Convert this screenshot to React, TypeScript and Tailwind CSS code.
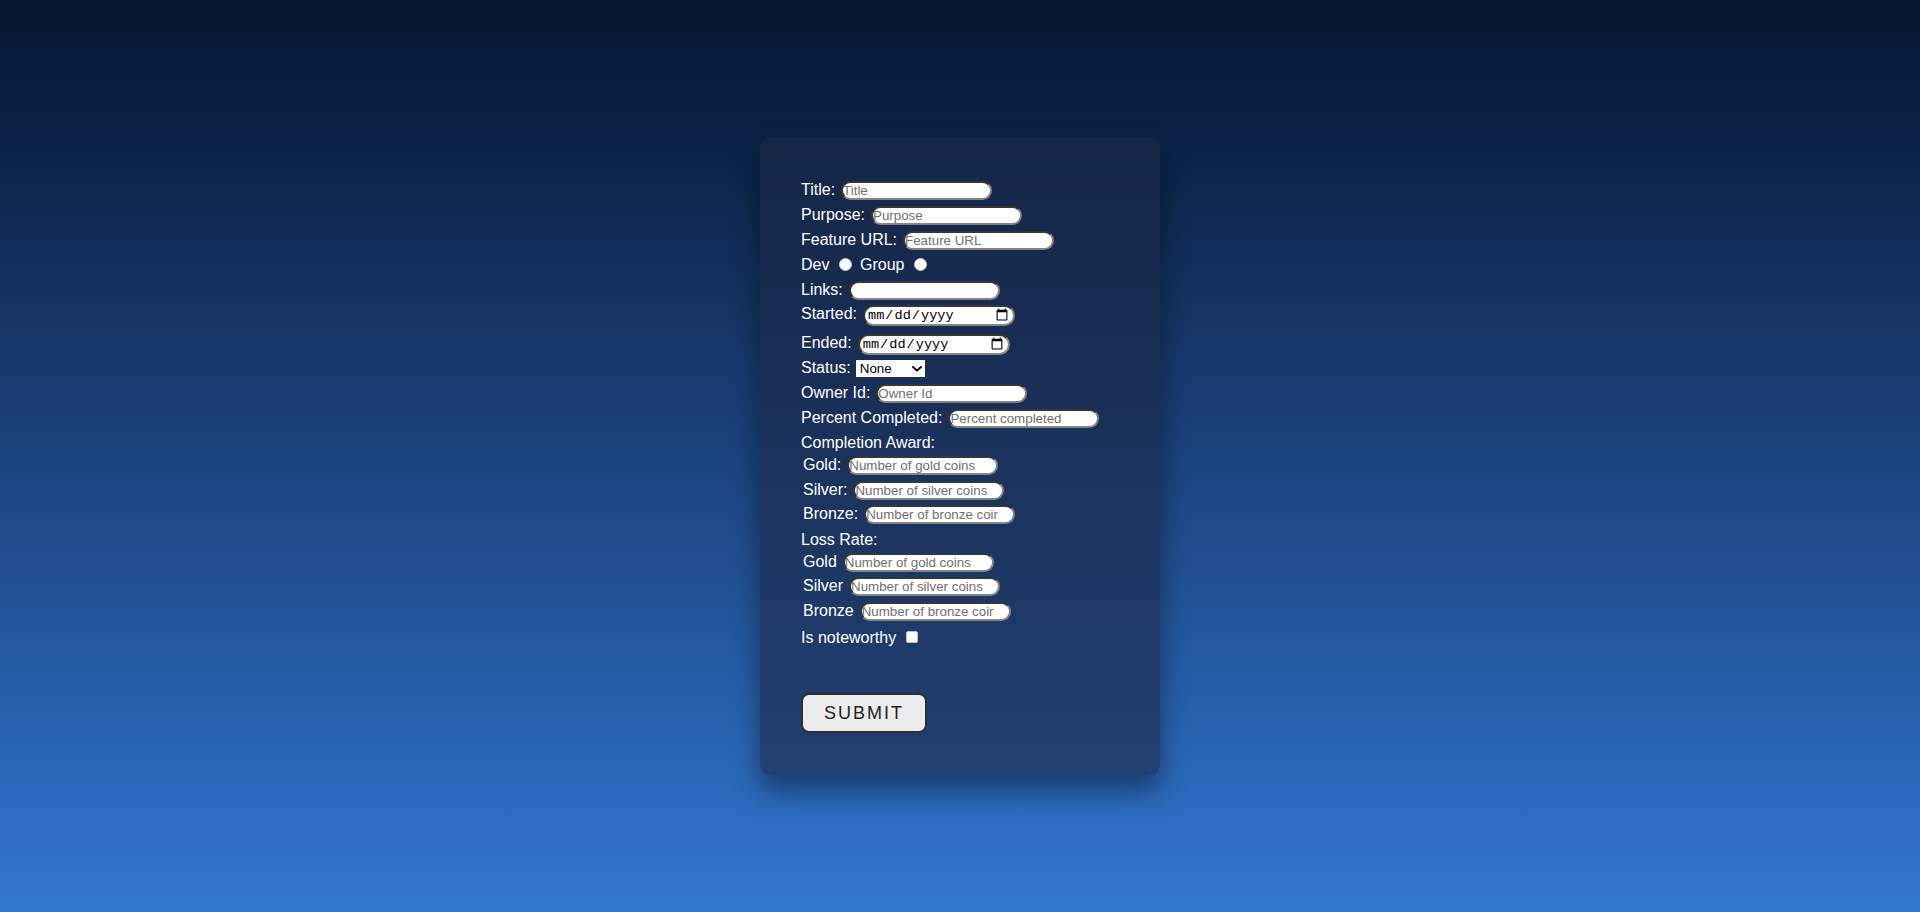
import type { ReactNode } from 'react'

const textInput =
  "ml-[6px] h-[19px] w-[151px] rounded-full border-2 border-t-[#363636] border-l-[#363636] border-r-[#858585] border-b-[#858585] bg-white px-0 text-[13.33px] leading-[15px] text-black placeholder:text-[#6f6f6f] outline-none"

const dateInput =
  "ml-[6px] h-[21px] w-[152px] rounded-full border-2 border-t-[#363636] border-l-[#363636] border-r-[#858585] border-b-[#858585] bg-white px-[2px] py-[1px] font-['Liberation_Mono',monospace] text-[13.6px] leading-[15px] text-black outline-none"

function Row({ h, children, indent }: { h: string; children: ReactNode; indent?: boolean }) {
  return (
    <div className={`flex items-baseline whitespace-nowrap ${h} ${indent ? 'pl-[2px]' : ''}`}>
      {children}
    </div>
  )
}

export default function App() {
  return (
    <div className="flex min-h-screen items-center justify-center bg-linear-to-b from-[#061530] to-[#3278d4] font-['Liberation_Sans',Arial,sans-serif]">
      <form
        onSubmit={(e) => e.preventDefault()}
        className="flex w-[400px] flex-col items-start rounded-[10px] bg-[rgba(27,40,71,0.62)] pt-[43px] pb-[42px] pl-[41px] text-[16px] leading-[18px] text-white shadow-[0_16px_28px_rgba(0,0,0,0.42)]"
      >
        <Row h="h-[25px]">
          <span>Title:</span>
          <input type="text" placeholder="Title" className={textInput} />
        </Row>
        <Row h="h-[25px]">
          <span>Purpose:</span>
          <input type="text" placeholder="Purpose" className={textInput} />
        </Row>
        <Row h="h-[25px]">
          <span>Feature URL:</span>
          <input type="text" placeholder="Feature URL" className={textInput} />
        </Row>
        <Row h="h-[25px]">
          <span>Dev</span>
          <input
            type="radio"
            name="kind"
            className="ml-[9.5px] mt-[2px] h-[13px] w-[13px] shrink-0 appearance-none self-start rounded-full border border-[#c9c9c9] bg-white"
          />
          <span className="ml-[8px]">Group</span>
          <input
            type="radio"
            name="kind"
            className="ml-[9.5px] mt-[2px] h-[13px] w-[13px] shrink-0 appearance-none self-start rounded-full border border-[#c9c9c9] bg-white"
          />
        </Row>
        <Row h="h-[24px]">
          <span>Links:</span>
          <input type="text" className={textInput} />
        </Row>
        <Row h="h-[29px]">
          <span>Started:</span>
          <input type="date" className={dateInput} />
        </Row>
        <Row h="h-[25px]">
          <span>Ended:</span>
          <input type="date" className={dateInput} />
        </Row>
        <Row h="h-[25px]">
          <span>Status:</span>
          <span className="relative ml-[5px] inline-flex">
            <select className="h-[17px] w-[69px] appearance-none rounded-none border-0 bg-white pl-[4px] text-[13.33px] leading-[15px] text-black outline-none">
              <option>None</option>
              <option>In Progress</option>
              <option>Completed</option>
            </select>
            <svg
              className="pointer-events-none absolute right-[3px] top-[6px] h-[6px] w-[10px]"
              viewBox="0 0 10 6"
              fill="none"
            >
              <path d="M1 1 L5 4.6 L9 1" stroke="#000" strokeWidth="1.9" strokeLinecap="round" strokeLinejoin="round" />
            </svg>
          </span>
        </Row>
        <Row h="h-[25px]">
          <span>Owner Id:</span>
          <input type="text" placeholder="Owner Id" className={textInput} />
        </Row>
        <Row h="h-[25px]">
          <span>Percent Completed:</span>
          <input type="number" placeholder="Percent completed" className={textInput} />
        </Row>
        <Row h="h-[22px]">
          <span>Completion Award:</span>
        </Row>
        <Row h="h-[25px]" indent>
          <span>Gold:</span>
          <input type="number" placeholder="Number of gold coins" className={textInput} />
        </Row>
        <Row h="h-[24px]" indent>
          <span>Silver:</span>
          <input type="number" placeholder="Number of silver coins" className={textInput} />
        </Row>
        <Row h="h-[26px]" indent>
          <span>Bronze:</span>
          <input type="number" placeholder="Number of bronze coins" className={textInput} />
        </Row>
        <Row h="h-[22px]">
          <span>Loss Rate:</span>
        </Row>
        <Row h="h-[24px]" indent>
          <span>Gold</span>
          <input type="number" placeholder="Number of gold coins" className={textInput} />
        </Row>
        <Row h="h-[25px]" indent>
          <span>Silver</span>
          <input type="number" placeholder="Number of silver coins" className={textInput} />
        </Row>
        <Row h="h-[27px]" indent>
          <span>Bronze</span>
          <input type="number" placeholder="Number of bronze coins" className={textInput} />
        </Row>
        <Row h="h-[25px]">
          <span>Is noteworthy</span>
          <input
            type="checkbox"
            className="ml-[9.5px] mt-[2px] h-[12px] w-[12px] shrink-0 appearance-none self-start rounded-[2px] border border-[#bdbdbd] bg-white"
          />
        </Row>
        <button
          type="submit"
          className="mt-[39px] flex h-[40px] w-[126px] items-center justify-center rounded-[8px] border-2 border-[#2f2f2f] bg-[#ececec] text-[18px] tracking-[2px] text-[#222]"
        >
          SUBMIT
        </button>
      </form>
    </div>
  )
}
